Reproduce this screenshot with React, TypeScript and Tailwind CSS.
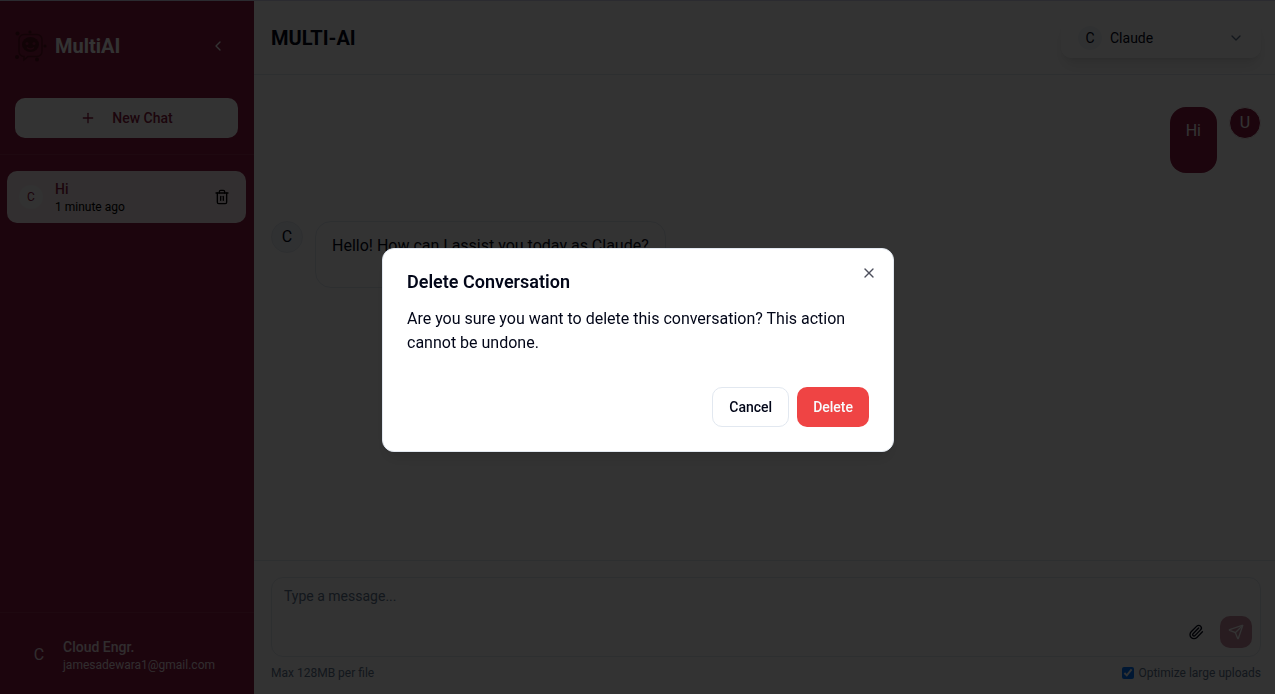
import React from "react";
import { ChevronDown, ChevronLeft, Paperclip, Plus, Send, Trash2, X } from "lucide-react";

function RobotLogo() {
  return (
    <svg viewBox="0 0 32 32" className="size-8 shrink-0" fill="none" stroke="#5f1024" strokeWidth="1.4" aria-hidden="true">
      <path d="M9 4.5h13a5 5 0 0 1 5 5v12a5 5 0 0 1-5 5H13l-4 3.5v-3.5a5 5 0 0 1-5-5v-12a5 5 0 0 1 5-5Z" />
      <ellipse cx="15.5" cy="14.5" rx="8.5" ry="7.5" fill="#55101f" stroke="none" />
      <circle cx="12" cy="13.5" r="1.5" fill="#8c1a40" stroke="none" />
      <circle cx="19" cy="13.5" r="1.5" fill="#8c1a40" stroke="none" />
      <path d="M12 17.5c2 2 5 2 7 0" stroke="#8c1a40" />
      <g fill="#55101f" stroke="none">
        <circle cx="2.5" cy="3.5" r="2" />
        <circle cx="15" cy="2" r="1.6" />
        <circle cx="30" cy="16" r="1.6" />
        <circle cx="2" cy="27" r="2" />
        <circle cx="22" cy="29.5" r="2" />
      </g>
    </svg>
  );
}

function Sidebar() {
  return (
    <aside className="flex w-[254px] shrink-0 flex-col bg-[#8c1a40] text-white">
      <div className="flex flex-col gap-8 border-b border-white/10 pt-[25px] pr-4 pb-4 pl-[15px]">
        <div className="flex items-center justify-between">
          <div className="flex items-center gap-2">
            <RobotLogo />
            <span className="text-xl font-bold">MultiAI</span>
          </div>
          <button type="button" aria-label="Collapse sidebar" className="flex size-10 items-center justify-center">
            <ChevronLeft className="size-4" />
          </button>
        </div>
        <button type="button" className="flex h-10 items-center justify-center gap-4 rounded-[10px] bg-white text-sm font-medium text-[#8c1a40]">
          <Plus className="size-4" />
          New Chat
        </button>
      </div>
      <div className="flex-1 pt-4 pr-2 pl-[7px]">
        <div className="flex h-[52px] items-center gap-3 rounded-[10px] bg-[#f8ecef] px-3">
          <span className="flex size-6 items-center justify-center rounded-full bg-[#fbf7f8] text-xs text-[#8c1a40]">C</span>
          <a href="#conversation" className="flex-1">
            <span className="block text-sm font-medium text-[#8c1a40]">Hi</span>
            <span className="block text-xs text-black">1 minute ago</span>
          </a>
          <button type="button" aria-label="Delete conversation" className="flex size-6 items-center justify-center text-black">
            <Trash2 className="size-4" />
          </button>
        </div>
      </div>
      <div className="flex items-center gap-2 border-t border-white/10 pt-6 pr-6 pb-[21px] pl-[23px] text-[#f0dfe4]">
        <span className="flex size-8 items-center justify-center">C</span>
        <div>
          <p className="text-sm font-medium">Cloud Engr.</p>
          <p className="text-xs">jamesadewara1@gmail.com</p>
        </div>
      </div>
    </aside>
  );
}

function Chat() {
  return (
    <main className="flex min-w-0 flex-1 flex-col">
      <header className="flex h-[74px] items-center justify-between border-b border-slate-200 pr-[14px] pl-[17px]">
        <h1 className="text-xl font-bold">MULTI-AI</h1>
        <button type="button" className="flex h-10 w-[200px] items-center gap-2 rounded-[10px] border border-white bg-white px-4 text-sm shadow-lg">
          <span className="flex size-6 items-center justify-center rounded-full bg-slate-100">C</span>
          <span className="flex-1 text-left">Claude</span>
          <ChevronDown className="size-4 text-slate-500" />
        </button>
      </header>

      <section className="flex flex-1 flex-col gap-12 pt-8 pr-[14px] pl-[17px]">
        <div className="flex items-start justify-end gap-3">
          <p className="h-[66px] rounded-2xl bg-[#8c1a40] px-4 py-3 text-white">Hi</p>
          <span className="flex size-8 items-center justify-center rounded-full border border-white bg-[#8c1a40] text-white">U</span>
        </div>
        <div className="flex items-start gap-3">
          <span className="flex size-8 items-center justify-center rounded-full border border-slate-200 bg-slate-100">C</span>
          <p className="h-[67px] rounded-2xl border border-slate-200 px-4 py-3">Hello! How can I assist you today as Claude?</p>
        </div>
      </section>

      <footer className="border-t border-slate-200 pt-4 pr-[14px] pb-[13px] pl-[17px]">
        <div className="flex h-20 rounded-xl border border-slate-200 p-2 pl-3">
          <textarea
            aria-label="Message"
            placeholder="Type a message..."
            className="min-w-0 flex-1 resize-none bg-transparent text-sm placeholder:text-slate-500"
          />
          <div className="flex items-end gap-2">
            <button type="button" aria-label="Attach file" className="flex size-8 items-center justify-center">
              <Paperclip className="size-4" />
            </button>
            <button type="button" aria-label="Send message" className="flex size-8 items-center justify-center rounded-[10px] bg-[#c58c9f] text-white">
              <Send className="size-4" />
            </button>
          </div>
        </div>
        <div className="mt-2 flex items-center justify-between text-xs text-slate-500">
          <span>Max 128MB per file</span>
          <label className="flex items-center gap-1">
            <input type="checkbox" defaultChecked className="size-3 accent-[#0075ff]" />
            Optimize large uploads
          </label>
        </div>
      </footer>
    </main>
  );
}

function DeleteDialog() {
  return (
    <div className="fixed inset-0 flex items-center justify-center bg-black/80 pt-[6px] pl-px">
      <div
        role="dialog"
        aria-modal="true"
        aria-labelledby="dialog-title"
        aria-describedby="dialog-text"
        className="relative w-full max-w-lg rounded-xl border border-slate-200 bg-white p-6 shadow-lg"
      >
        <h2 id="dialog-title" className="text-lg leading-[18px] font-semibold">Delete Conversation</h2>
        <p id="dialog-text" className="mt-4 text-base">
          Are you sure you want to delete this conversation? This action cannot be undone.
        </p>
        <div className="mt-8 flex justify-end gap-2 text-sm font-medium">
          <button type="button" className="h-10 rounded-[10px] border border-slate-200 px-4">Cancel</button>
          <button type="button" className="h-10 rounded-[10px] bg-[#ef4444] px-4 text-slate-50">Delete</button>
        </div>
        <button type="button" aria-label="Close" className="absolute top-4 right-4 text-slate-950 opacity-70">
          <X className="size-4" />
        </button>
      </div>
    </div>
  );
}

export default function App() {
  return (
    <div className="flex min-h-screen flex-col border-t border-[#d8d8f0] bg-white font-['Roboto',sans-serif] text-slate-950">
      <div className="flex flex-1">
        <Sidebar />
        <Chat />
      </div>
      <DeleteDialog />
    </div>
  );
}
